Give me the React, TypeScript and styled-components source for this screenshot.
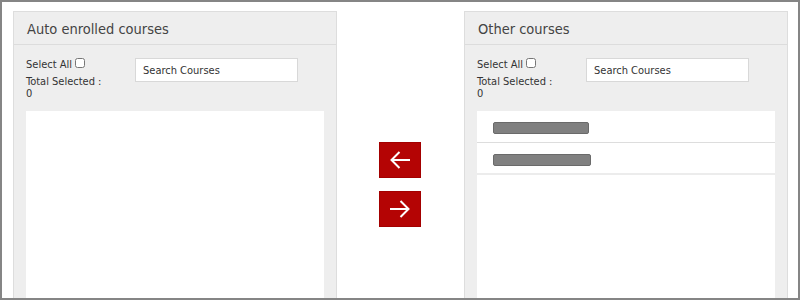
import React from 'react';
import styled, { createGlobalStyle } from 'styled-components';

const GlobalStyle = createGlobalStyle`
  html, body {
    margin: 0;
    padding: 0;
    background: #ffffff;
  }
  * {
    box-sizing: border-box;
  }
`;

const otherCourses = [{ id: 1, w: 96 }, { id: 2, w: 98 }];

const CoursePanel = ({ title, items }: { title: string; items: { id: number; w: number }[] }) => (
  <StPanel>
    <StHeader>{title}</StHeader>
    <StControls>
      <StSelectBox>
        <StSelectAll>
          Select All <input type="checkbox" />
        </StSelectAll>
        <p>Total Selected :</p>
        <p>0</p>
      </StSelectBox>
      <StSearch placeholder="Search Courses" />
    </StControls>
    <StList>
      {items.map((item) => (
        <StRow key={item.id}>
          <StBar $w={item.w} />
        </StRow>
      ))}
    </StList>
  </StPanel>
);

const Arrow = ({ dir }: { dir: 'left' | 'right' }) => (
  <svg width="22" height="20" viewBox="0 0 22 20" fill="none" stroke="#fff" strokeWidth="2">
    {dir === 'left' ? (
      <>
        <path d="M2.5 10H21" />
        <path d="M10.5 2L2.5 10L10.5 18" />
      </>
    ) : (
      <>
        <path d="M1 10H19.5" />
        <path d="M11.5 2L19.5 10L11.5 18" />
      </>
    )}
  </svg>
);

const App = () => {
  return (
    <>
      <GlobalStyle />
      <StFrame>
        <CoursePanel title="Auto enrolled courses" items={[]} />
        <StMiddle>
          <StMoveButton aria-label="Move left">
            <Arrow dir="left" />
          </StMoveButton>
          <StMoveButton aria-label="Move right">
            <Arrow dir="right" />
          </StMoveButton>
        </StMiddle>
        <CoursePanel title="Other courses" items={otherCourses} />
      </StFrame>
    </>
  );
};

export default App;

const StFrame = styled.div`
  display: flex;
  width: 800px;
  height: 300px;
  border: 2px solid #858585;
  padding: 9px 10px 0 11px;
  overflow: hidden;
  font-family: 'DejaVu Sans Condensed', 'Noto Sans', sans-serif;
`;

const StPanel = styled.div`
  display: flex;
  flex-direction: column;
  width: 324px;
  height: 330px;
  flex-shrink: 0;
  background-color: #eeeeee;
  border: 1px solid #dddddd;
`;

const StHeader = styled.div`
  height: 33px;
  line-height: 34px;
  padding: 0 13px;
  border-bottom: 1px solid #dcdcdc;
  font-size: 14.5px;
  color: #444444;
`;

const StControls = styled.div`
  display: flex;
  align-items: flex-start;
  padding: 14px 12px 0 12px;
  height: 66px;
  font-size: 11px;
  color: #333333;
`;

const StSelectBox = styled.div`
  width: 109px;
  p {
    margin: 0;
    line-height: 12px;
  }
`;

const StSelectAll = styled.label`
  display: flex;
  align-items: flex-start;
  line-height: 12px;
  margin-bottom: 5px;
  input {
    width: 10px;
    height: 10px;
    margin: -1px 0 0 3px;
  }
`;

const StSearch = styled.input`
  width: 163px;
  height: 24px;
  margin-top: -1px;
  padding: 0 7px;
  border: 1px solid #d8d8d8;
  background: #ffffff;
  font-family: inherit;
  font-size: 11px;
  color: #333333;
  outline: none;
  &::placeholder {
    color: #333333;
  }
`;

const StList = styled.div`
  display: flex;
  flex-direction: column;
  flex: 1;
  margin: 0 12px;
  background-color: #ffffff;
`;

const StRow = styled.div`
  display: flex;
  align-items: flex-start;
  height: 32px;
  padding: 11px 0 0 16px;
  border-bottom: 1px solid #dddddd;
  &:last-child {
    border-bottom: 2px solid #ececec;
  }
`;

const StBar = styled.div<{ $w: number }>`
  width: ${(props) => props.$w}px;
  height: 12px;
  background-color: #808080;
  border: 1px solid #6a6a6a;
  border-radius: 2px;
`;

const StMiddle = styled.div`
  flex: 1;
  display: flex;
  flex-direction: column;
  align-items: center;
  gap: 13px;
  padding: 131px 2px 0 0;
`;

const StMoveButton = styled.button`
  display: flex;
  align-items: center;
  justify-content: center;
  width: 42px;
  height: 36px;
  padding: 0;
  background-color: #b40404;
  border: 1px solid #a30000;
  cursor: pointer;
`;
